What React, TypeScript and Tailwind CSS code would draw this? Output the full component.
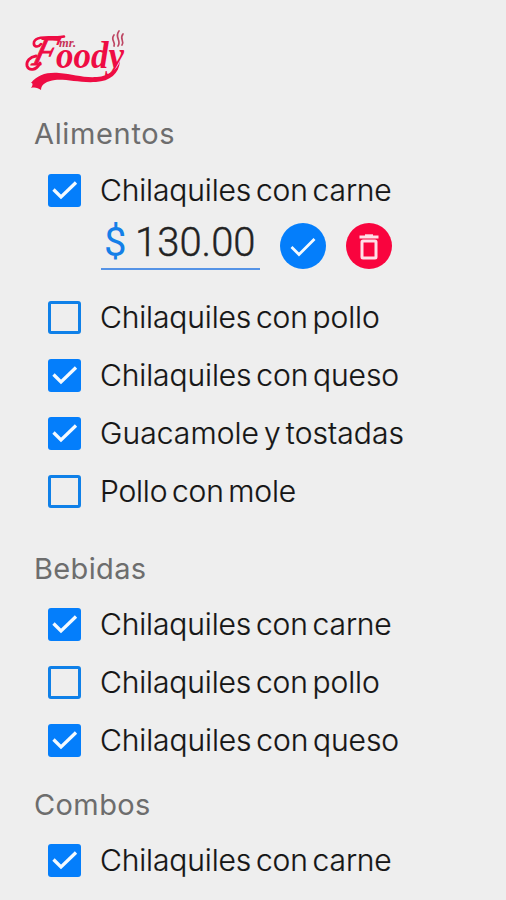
import { useState } from 'react'

type MenuItem = {
    name: string
    checked: boolean
    price?: string
    tracking: string
}

type MenuSection = {
    title: string
    heading: string
    items: MenuItem[]
}

const initialSections: MenuSection[] = [
    {
        title: 'Alimentos',
        heading: 'h-[58px] pt-[9px] tracking-[0.65px]',
        items: [
            { name: 'Chilaquiles con carne', checked: true, price: '130.00', tracking: 'tracking-[-0.13px]' },
            { name: 'Chilaquiles con pollo', checked: false, tracking: 'tracking-[-0.13px]' },
            { name: 'Chilaquiles con queso', checked: true, tracking: 'tracking-[-0.1px]' },
            { name: 'Guacamole y tostadas', checked: true, tracking: 'tracking-[0.08px]' },
            { name: 'Pollo con mole', checked: false, tracking: 'tracking-[-0.2px]' }
        ]
    },
    {
        title: 'Bebidas',
        heading: 'h-[75px] pt-[27px] tracking-[0.35px]',
        items: [
            { name: 'Chilaquiles con carne', checked: true, tracking: 'tracking-[-0.13px]' },
            { name: 'Chilaquiles con pollo', checked: false, tracking: 'tracking-[-0.13px]' },
            { name: 'Chilaquiles con queso', checked: true, tracking: 'tracking-[-0.1px]' }
        ]
    },
    {
        title: 'Combos',
        heading: 'h-[62px] pt-[14px] tracking-[0.4px]',
        items: [
            { name: 'Chilaquiles con carne', checked: true, tracking: 'tracking-[-0.13px]' }
        ]
    }
]

function Logo() {
    return (
        <svg width="104" height="64" viewBox="0 0 104 64" fill="none" className="block text-[#ee0c43]">
            <text x="19" y="38" transform="skewX(-16)" fontSize="41" fontWeight="400" fontStyle="italic" textLength="22" lengthAdjust="spacingAndGlyphs" fill="currentColor" stroke="currentColor" strokeWidth="1" className="font-['Liberation_Serif',serif]">F</text>
            <text x="33" y="41" fontSize="37" fontWeight="700" fontStyle="italic" textLength="68" lengthAdjust="spacingAndGlyphs" fill="currentColor" className="font-['Liberation_Serif',serif]">oody</text>
            <text x="36" y="20" fontSize="12" fontWeight="700" fontStyle="italic" textLength="17" lengthAdjust="spacingAndGlyphs" fill="#c73357" className="font-['Liberation_Serif',serif]">mr.</text>
            {/* flourishes around the initial */}
            <path d="M41 9.5C32 12 14 7 11 15C10 20 15 21 18 17" stroke="currentColor" strokeWidth="2.6" strokeLinecap="round" />
            <path d="M17 36C13 44 6 44 4 39C3 34 7 30 13 29" stroke="currentColor" strokeWidth="2.8" strokeLinecap="round" />
            {/* underline ribbon */}
            <path d="M8 61C10 58 10 56 8 56C14 48 24 45 36 46C50 47 60 51 74 50C86 49 94 43 97 34C96 47 87 54 73 55C56 56 44 52 32 53C24 54 18 57 18 63C15 61 12 60 8 61Z" fill="currentColor" />
            {/* steam */}
            <path d="M91 19C93 15 87 13 91 8M95 19C99 14 91 10 96 4M99 18C102 14 96 12 100 7" stroke="#bd4663" strokeWidth="1.7" strokeLinecap="round" />
        </svg>
    )
}

function Checkbox({ checked }: { checked: boolean }) {
    if (!checked) {
        return <span className="size-[33px] shrink-0 rounded-[3px] border-3 border-[#0f80e8]" />
    }

    return (
        <span className="flex size-[33px] shrink-0 items-center justify-center rounded-[3px] bg-[#047efb]">
            <svg width="33" height="33" viewBox="0 0 33 33" fill="none">
                <path d="M5.5 15.5L13 23L28 8.5" stroke="#f4faff" strokeWidth="3.3" />
            </svg>
        </span>
    )
}

function PriceEditor({ price, onRemove }: { price: string; onRemove: () => void }) {
    return (
        <div className="flex h-[69px] pl-[101px]">
            <div className="flex h-[50px] w-[159px] items-center border-b-[2.5px] border-[#5593e6] pb-px pl-[3px] font-[Roboto,sans-serif] text-[40px] leading-none font-[350]">
                <span className="w-[31px] font-normal text-[#147fe8]">$</span>
                <span className="text-[#222] [-webkit-text-stroke:0.4px_#222]">{price}</span>
            </div>
            <button type="button" aria-label="Guardar" className="mt-[3px] ml-[20px] size-[46px] rounded-full bg-[#047efb]">
                <svg width="46" height="46" viewBox="0 0 46 46" fill="none">
                    <path d="M11.5 24L19 31.5L34.5 16" stroke="#f4faff" strokeWidth="2.8" />
                </svg>
            </button>
            <button type="button" aria-label="Eliminar" onClick={onRemove} className="mt-[3px] ml-5 size-[46px] rounded-full bg-[#f9043e]">
                <svg width="46" height="46" viewBox="0 0 46 46" fill="none" stroke="#ffdfe7">
                    <path d="M13.5 14H32.5" strokeWidth="3" />
                    <path d="M19 12.3H27" strokeWidth="2" />
                    <rect x="16" y="18" width="14" height="17" rx="1" strokeWidth="3" />
                </svg>
            </button>
        </div>
    )
}

export default function App() {
    const [sections, setSections] = useState(initialSections)

    const toggle = (sectionIndex: number, itemIndex: number) => {
        setSections(sections.map((section, s) => s !== sectionIndex ? section : {
            ...section,
            items: section.items.map((item, i) => i !== itemIndex ? item : { ...item, checked: !item.checked })
        }))
    }

    return (
        <main className="h-[900px] w-full overflow-hidden bg-[#eeeeee] font-[Inter,sans-serif]">
            <header className="h-[103.5px] pt-[27px] pl-[23px]">
                <Logo />
            </header>

            {sections.map((section, s) => (
                <section key={section.title}>
                    <h2 className={`pl-[34px] text-[29px] leading-[42px] font-normal text-[#6d6d6d] ${section.heading}`}>
                        {section.title}
                    </h2>
                    {section.items.map((item, i) => (
                        <div key={item.name}>
                            <button
                                type="button"
                                role="checkbox"
                                aria-checked={item.checked}
                                onClick={() => toggle(s, i)}
                                className="flex h-[58px] w-full items-center gap-[19px] pl-12 text-left"
                            >
                                <Checkbox checked={item.checked} />
                                <span className={`pb-[2px] text-[30px] leading-[40px] font-light whitespace-nowrap text-[#151515] [word-spacing:-3.5px] [-webkit-text-stroke:0.2px_#151515] ${item.tracking}`}>
                                    {item.name}
                                </span>
                            </button>
                            {item.price && item.checked && (
                                <PriceEditor price={item.price} onRemove={() => toggle(s, i)} />
                            )}
                        </div>
                    ))}
                </section>
            ))}
        </main>
    )
}
